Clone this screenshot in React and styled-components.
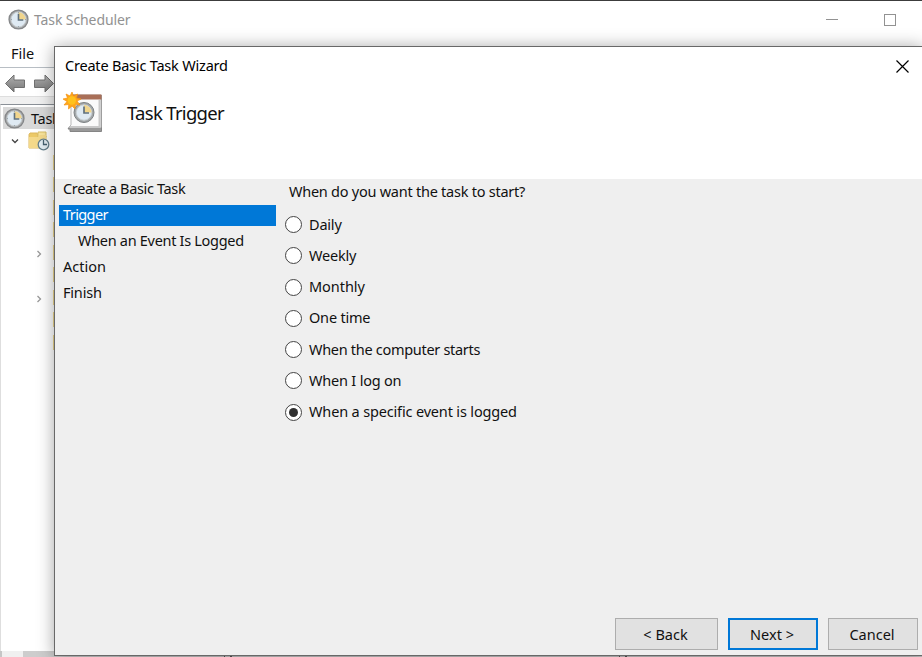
import React from "react";
import styled, { createGlobalStyle } from "styled-components";

const Global = createGlobalStyle`
  * { box-sizing: border-box; }
  body { margin: 0; overflow: hidden; background: #fff; }
`;

const Desktop = styled.div`
  position: relative;
  display: flex;
  flex-direction: column;
  width: 922px;
  height: 657px;
  overflow: hidden;
  background: #fff;
  border-top: 1px solid #3c3c3c;
  font-family: "Noto Sans", "Open Sans", sans-serif;
  font-size: 14.5px;
  color: #111;
  svg { flex: none; }
`;

const Text = styled.span`
  font-size: ${(p) => p.$size || 14.5}px;
  letter-spacing: ${(p) => p.$track || 0}px;
  line-height: 20px;
  white-space: nowrap;
  margin-bottom: 2px;
`;

const TitleBar = styled.header`
  display: flex;
  align-items: center;
  height: 37px;
  padding: 0 26px 0 8px;
  color: #929292;
`;
const AppName = styled(Text)`margin: 0 0 0 5px; flex: 1;`;
const MinimizeMark = styled.span`width: 12px; height: 1px; background: #929292; margin-right: 46px;`;
const MaximizeMark = styled.span`width: 12px; height: 12px; border: 1px solid #929292; margin-top: 1px;`;

const MenuBar = styled.nav`
  height: 30px;
  padding: 5px 0 0 11px;
  border-bottom: 1px solid #b8bec4;
  flex: none;
`;
const ToolBar = styled.div`
  display: flex;
  gap: 8px;
  height: 29px;
  padding: 5px 0 0 5px;
  border-bottom: 1px solid #dedede;
  flex: none;
`;
const Gutter = styled.div`height: 7px; background: #f0f0f0; flex: none;`;
const Tree = styled.div`
  flex: 1;
  border-top: 1px solid #8a9097;
  border-left: 1px solid #dedede;
  padding-left: 1px;
`;
const RootRow = styled.div`
  display: flex;
  align-items: center;
  gap: 6px;
  height: 22px;
  margin: 2px 0 0 1px;
  padding-left: 1px;
  width: 90px;
  background: #d9d9d9;
`;
const RootName = styled(Text)`margin: 0;`;
const LibraryRow = styled.div`
  display: flex;
  align-items: center;
  height: 22px;
  padding: 2px 0 0 9px;
  gap: 9px;
`;
const FolderRow = styled.div`
  display: flex;
  align-items: center;
  height: 22.5px;
  width: 54px;
  padding-left: 33px;
  svg { margin-top: 4px; }
`;
const FolderEdge = styled.span`
  flex: none;
  width: 4px;
  height: 15px;
  margin-left: ${(p) => (p.$branch ? 10 : 18)}px;
  background: #eed98e;
`;
const ScrollStrip = styled.div`
  display: flex;
  height: 6px;
  padding-left: 2px;
  background: #c6c6c6;
`;
const ScrollEnd = styled.span`width: 21px; background: #f0f0f0;`;
const ScrollThumb = styled.span`width: 96px; background: #cdcdcd;`;
const PaneGap = styled.span`
  width: 8px;
  margin-left: ${(p) => p.$offset}px;
  background: #c6c6c6;
  border: solid #555;
  border-width: 0 2px 0 1px;
`;

const Dialog = styled.section`
  position: absolute;
  left: 54px;
  top: 45px;
  width: 869px;
  height: 610px;
  display: flex;
  flex-direction: column;
  background: #fff;
  border: 1px solid #686868;
  box-shadow: 0 1px 16px rgba(0, 0, 0, 0.36);
`;
const DialogTitle = styled.header`
  display: flex;
  justify-content: space-between;
  align-items: center;
  height: 38px;
  padding: 0 13px 0 10px;
  color: #000;
`;
const PageHeader = styled.div`
  display: flex;
  height: 94px;
  padding: 6px 0 0 7px;
`;
const PageTitle = styled(Text).attrs({ as: "h1" })`
  margin: 10px 0 0 24px;
  font-weight: 400;
  line-height: 24px;
`;
const Content = styled.div`
  flex: 1;
  display: grid;
  grid-template-columns: 222px 1fr;
  background: #efefef;
`;
const Steps = styled.ul`
  list-style: none;
  margin: 0;
  padding: 0 0 0 4px;
`;
const Step = styled.li`
  display: flex;
  align-items: center;
  width: 217px;
  height: 21px;
  margin-bottom: 5.2px;
  padding: 0 0 2px ${(p) => (p.$nested ? 19 : 4)}px;
  background: ${(p) => (p.$current ? "#0078d7" : "transparent")};
  color: ${(p) => (p.$current ? "#fff" : "#111")};
`;
const Choices = styled.div`padding: 2px 0 0 8px;`;
const Question = styled.div`height: 28px; padding-left: 4px;`;
const Choice = styled.div`
  display: flex;
  align-items: center;
  gap: 7px;
  height: 31.25px;
`;
const Radio = styled.span`
  display: grid;
  place-items: center;
  width: 17px;
  height: 17px;
  border: 1px solid #444;
  border-radius: 50%;
  background: #fff;
  &::after {
    content: "";
    width: 9px;
    height: 9px;
    border-radius: 50%;
    background: ${(p) => (p.$on ? "#303030" : "transparent")};
  }
`;
const Footer = styled.footer`
  display: flex;
  justify-content: flex-end;
  gap: 10px;
  height: 37px;
  padding-right: 4px;
  background: #efefef;
`;
const Button = styled.button`
  width: ${(p) => p.$width}px;
  height: 32px;
  padding: 0 2px 1px 0;
  border: ${(p) => (p.$primary ? "2px solid #0078d7" : "1px solid #adadad")};
  background: #e1e1e1;
  color: #111;
  font-family: inherit;
`;

const Clock = ({ size }) => (
  <svg width={size} height={size} viewBox="0 0 22 22">
    <circle cx="11" cy="11" r="9.9" fill="#a9abad" stroke="#858789" strokeWidth="1.4" />
    <circle cx="11" cy="11" r="7.8" fill="#dfeaf3" stroke="#c9d0d3" />
    <path d="M11 3.5A7.5 7.5 0 0 1 18.5 11H11Z" fill="#f1d58c" />
    <path d="M11 5v6.5h5" fill="none" stroke="#60717e" strokeWidth="1.7" />
    <path d="M11 3v1M11 18v1M3 11h1M18 11h1" stroke="#8d999f" />
  </svg>
);

const Arrow = ({ flip }) => (
  <svg width="21" height="20" viewBox="0 0 21 20">
    <defs>
      <linearGradient id="steel" x1="0" y1="0" x2="0" y2="1">
        <stop offset="0" stopColor="#b0b0b0" />
        <stop offset="1" stopColor="#777" />
      </linearGradient>
    </defs>
    <path
      d="M.5 10.5 9 2V7H19.5V14.5H9V19Z"
      transform={flip ? "translate(20 0) scale(-1 1)" : undefined}
      fill="url(#steel)"
      stroke="#707070"
      strokeLinejoin="round"
    />
  </svg>
);

const Chevron = ({ down }) => (
  <svg width="8" height="8" viewBox="0 0 8 8" fill="none" stroke={down ? "#444" : "#999"} strokeWidth="1.3">
    <path d={down ? "M1 2.5 4 5.5 7 2.5" : "M2.5 1 5.5 4 2.5 7"} />
  </svg>
);

const LibraryIcon = () => (
  <svg width="22" height="20" viewBox="0 0 22 20">
    <path d="M1 3.5 2 2h7l1 2h7l1 1v12H1Z" fill="#ecc967" stroke="#dcb75c" />
    <path d="M10 1h8v5h-8Z" fill="#f8e49b" stroke="#d9bd66" />
    <path d="M1 6h9l1.5-2H18v13H1Z" fill="#f4d98a" />
    <circle cx="15.5" cy="13.5" r="5.3" fill="#e3eef3" stroke="#66808d" strokeWidth="1.3" />
    <path d="M15.5 9v4.5h3.5" fill="none" stroke="#44606f" strokeWidth="1.3" />
  </svg>
);

const TaskIcon = () => (
  <svg width="41" height="42" viewBox="0 0 41 42">
    <path d="M8 35 6 38h2v2.5h31.5V4" fill="#999" stroke="#858585" />
    <path d="M9 4h30v32.5H6.5L9 34Z" fill="#fafafa" stroke="#b7b7b7" />
    <path d="M37.5 9v27H8" fill="none" stroke="#c9c9c9" strokeWidth="2" />
    <path d="M10 3.5h29.5v5H10Z" fill="#a96f58" />
    <circle cx="22" cy="21.5" r="10" fill="#a3a7a9" stroke="#7d8284" />
    <circle cx="22" cy="21.5" r="7.7" fill="#dfeaf3" stroke="#c9d0d3" />
    <path d="M22 14a7.5 7.5 0 0 1 7.5 7.5H22Z" fill="#f1d58c" />
    <path d="M22 15.5V22h5" fill="none" stroke="#60717e" strokeWidth="1.7" />
    <path
      d="m10 1 1.5 4 4-2-1 4 4.5 1-4 2 3 4-4.5-.5L13 18l-3-3-3.5 3 .2-4.5-4.7.5 3-3.5-4-2.5 4.5-1L4 3l4 2Z"
      fill="#ffa51a"
      stroke="#f39413"
      strokeWidth=".7"
    />
    <circle cx="9.8" cy="9.5" r="4.2" fill="#ffc21c" />
  </svg>
);

const CloseIcon = () => (
  <svg width="13" height="13" viewBox="0 0 13 13" stroke="#000" strokeWidth="1.2">
    <path d="M.5.5 12.5 12.5M12.5.5.5 12.5" />
  </svg>
);

const steps = [
  { label: "Create a Basic Task", track: -0.35 },
  { label: "Trigger", track: -0.6, current: true },
  { label: "When an Event Is Logged", track: -0.3, nested: true },
  { label: "Action", track: 0 },
  { label: "Finish", track: -0.2 },
];

const choices = [
  ["Daily", -0.2],
  ["Weekly", -0.2],
  ["Monthly", -0.05],
  ["One time", -0.2],
  ["When the computer starts", -0.3],
  ["When I log on", -0.2],
  ["When a specific event is logged", -0.16],
];
const branches = [4, 6];

export default function App() {
  return (
    <Desktop>
      <Global />
      <TitleBar>
        <Clock size={21} />
        <AppName $size={14} $track={-0.1}>Task Scheduler</AppName>
        <MinimizeMark />
        <MaximizeMark />
      </TitleBar>
      <MenuBar><Text>File</Text></MenuBar>
      <ToolBar><Arrow /><Arrow flip /></ToolBar>
      <Gutter />
      <Tree>
        <RootRow><Clock size={21} /><RootName $track={-0.3}>Task Scheduler</RootName></RootRow>
        <LibraryRow><Chevron down /><LibraryIcon /></LibraryRow>
        {Array.from({ length: 9 }, (_, i) => (
          <FolderRow key={i}>
            {branches.includes(i) && <Chevron />}
            <FolderEdge $branch={branches.includes(i)} />
          </FolderRow>
        ))}
      </Tree>
      <ScrollStrip>
        <ScrollEnd />
        <ScrollThumb />
        <PaneGap $offset={105} />
        <PaneGap $offset={387} />
      </ScrollStrip>
      <Dialog>
        <DialogTitle>
          <Text $track={-0.2}>Create Basic Task Wizard</Text>
          <CloseIcon />
        </DialogTitle>
        <PageHeader>
          <TaskIcon />
          <PageTitle $size={18.5} $track={-0.7}>Task Trigger</PageTitle>
        </PageHeader>
        <Content>
          <Steps>
            {steps.map((s) => (
              <Step key={s.label} $current={s.current} $nested={s.nested}>
                <Text $track={s.track}>{s.label}</Text>
              </Step>
            ))}
          </Steps>
          <Choices>
            <Question><Text $track={-0.25}>When do you want the task to start?</Text></Question>
            {choices.map(([label, track], i) => (
              <Choice key={label}>
                <Radio $on={i === choices.length - 1} />
                <Text $track={track}>{label}</Text>
              </Choice>
            ))}
          </Choices>
        </Content>
        <Footer>
          <Button $width={103}><Text>&lt; Back</Text></Button>
          <Button $width={90} $primary><Text>Next &gt;</Text></Button>
          <Button $width={90}><Text>Cancel</Text></Button>
        </Footer>
      </Dialog>
    </Desktop>
  );
}
